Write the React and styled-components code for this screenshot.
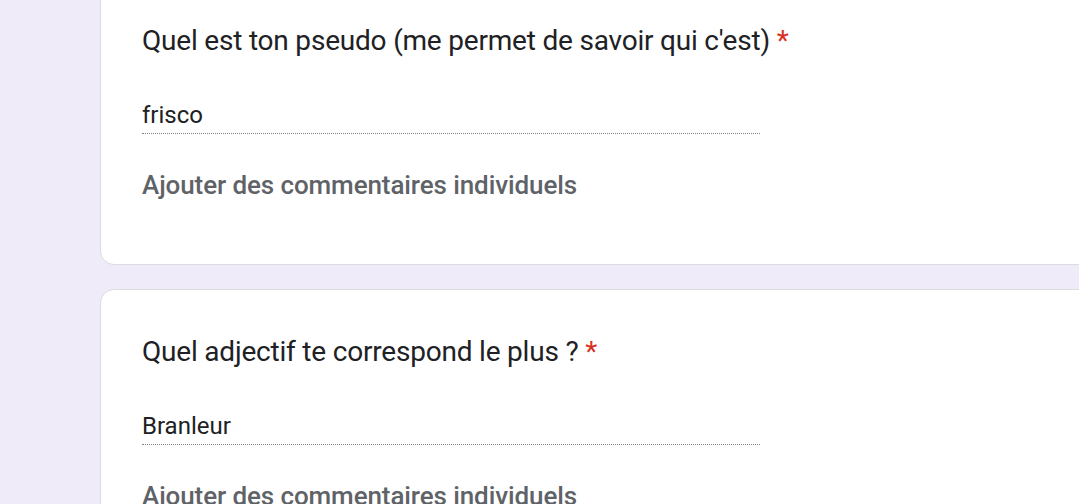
import React from 'react'
import styled, { createGlobalStyle } from 'styled-components'

const GlobalStyle = createGlobalStyle`
  html, body {
    margin: 0;
    padding: 0;
    background: #f0ebf8;
    overflow: hidden;
  }
  body {
    font-family: Roboto, 'Liberation Sans', Arial, sans-serif;
  }
`

const Page = styled.div`
  display: flex;
  flex-direction: column;
  gap: 24px;
  margin-top: -22px;
  padding-left: 100px;
`

const Card = styled.section`
  width: 1100px;
  box-sizing: border-box;
  background: #fff;
  border: 1px solid #dadce0;
  border-radius: 14px;
  padding: 44px 0 62px 41px;
  display: flex;
  flex-direction: column;
`

const Question = styled.div`
  font-size: 28px;
  line-height: 36px;
  color: #202124;
  letter-spacing: -0.2px;
`

const Required = styled.span`
  color: #d93025;
`

const Answer = styled.div`
  margin-top: 40px;
  width: 618px;
  font-size: 24px;
  line-height: 32px;
  color: #202124;
  padding-bottom: 2px;
  border-bottom: 1px dotted #80868b;
`

const Comment = styled.div`
  margin-top: 34px;
  font-size: 26px;
  line-height: 34px;
  font-weight: 500;
  letter-spacing: -0.1px;
  color: #5f6368;
`

const items = [
  { question: "Quel est ton pseudo (me permet de savoir qui c'est)", answer: 'frisco' },
  { question: 'Quel adjectif te correspond le plus ?', answer: 'Branleur' }
]

export default function App () {
  return (
    <>
      <GlobalStyle />
      <Page>
        {items.map((item, i) => (
          <Card key={i}>
            <Question>
              {item.question} <Required>*</Required>
            </Question>
            <Answer>{item.answer}</Answer>
            <Comment>Ajouter des commentaires individuels</Comment>
          </Card>
        ))}
      </Page>
    </>
  )
}
